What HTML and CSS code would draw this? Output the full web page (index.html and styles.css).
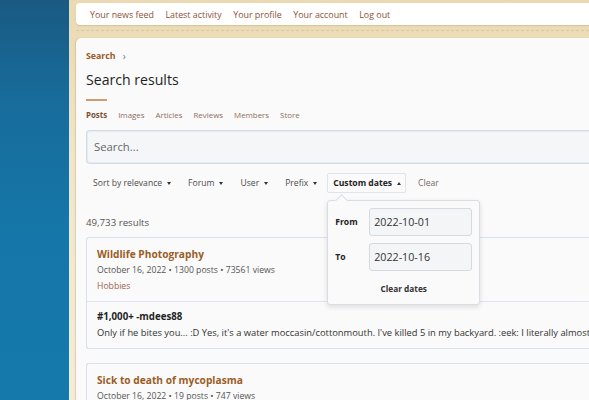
FILE: index.html
```html
<!DOCTYPE html>
<html lang="en">
<head>
<meta charset="utf-8">
<title>Search results</title>
<link rel="stylesheet" href="styles.css">
</head>
<body>
<div class="page">
  <div class="sidebar"></div>
  <div class="main">
    <nav class="topnav">
      <a href="#">Your news feed</a>
      <a href="#">Latest activity</a>
      <a href="#">Your profile</a>
      <a href="#">Your account</a>
      <a href="#">Log out</a>
    </nav>
    <div class="dash"></div>
    <div class="panel">
      <div class="crumbs"><a href="#">Search</a><span class="chev">&rsaquo;</span></div>
      <h1 class="title">Search results</h1>
      <div class="title-rule"></div>
      <div class="tabs">
        <a class="tab active" href="#">Posts</a>
        <a class="tab" href="#">Images</a>
        <a class="tab" href="#">Articles</a>
        <a class="tab" href="#">Reviews</a>
        <a class="tab" href="#">Members</a>
        <a class="tab" href="#">Store</a>
      </div>
      <div class="searchbox">Search...</div>
      <div class="filters">
        <span class="filter down sort">Sort by relevance</span>
        <span class="filter down">Forum</span>
        <span class="filter down">User</span>
        <span class="filter down">Prefix</span>
        <span class="filter-wrap">
          <span class="filter up open">Custom dates</span>
          <div class="popup">
            <div class="prow"><span class="plabel">From</span><span class="pinput">2022-10-01</span></div>
            <div class="prow"><span class="plabel">To</span><span class="pinput">2022-10-16</span></div>
            <div class="pclear">Clear dates</div>
          </div>
        </span>
        <span class="filter clear">Clear</span>
      </div>
      <div class="count">49,733 results</div>
      <div class="card">
        <div class="card-head">
          <div class="rtitle">Wildlife Photography</div>
          <div class="meta">October 16, 2022 &bull; 1300 posts &bull; 73561 views</div>
          <div class="forum">Hobbies</div>
        </div>
        <div class="card-body">
          <div class="ptitle">#1,000+ -mdees88</div>
          <div class="snippet">Only if he bites you... :D Yes, it's a water moccasin/cottonmouth. I've killed 5 in my backyard. :eek: I literally almost stepped on it while mowing the lawn.</div>
        </div>
      </div>
      <div class="card">
        <div class="card-head">
          <div class="rtitle">Sick to death of mycoplasma</div>
          <div class="meta">October 16, 2022 &bull; 19 posts &bull; 747 views</div>
        </div>
      </div>
    </div>
  </div>
</div>
</body>
</html>
```
FILE: styles.css
```css
html, body {
  margin: 0;
  padding: 0;
  height: 100%;
  overflow: hidden;
}
body {
  font-family: "Open Sans", "Noto Sans", "Liberation Sans", sans-serif;
  background: #efe3c5;
  color: #333;
}
a { text-decoration: none; }
.page {
  display: flex;
  height: 400px;
  overflow: hidden;
}
.sidebar {
  flex: 0 0 69px;
  background: linear-gradient(180deg, #1a5a82 0%, #176c9b 25%, #1577a9 60%, #1679ab 100%);
}
.main {
  flex: 0 0 560px;
  padding-left: 7px;
  padding-top: 3px;
  background: linear-gradient(180deg, #ead9b2 0%, #f1e6c9 40%, #f4ecd5 100%);
}
.topnav {
  height: 22px;
  background: #fff;
  border-radius: 4px 0 0 4px;
  display: flex;
  align-items: center;
  gap: 11.5px;
  padding-left: 14px;
  box-shadow: 0 1px 1px rgba(150, 120, 60, 0.25);
}
.topnav a {
  color: #8d5236;
  font-size: 8.9px;
}
.dash {
  margin-top: 5px;
  border-top: 1px dashed #d6c49b;
  opacity: 0.8;
}
.panel {
  margin-top: 7px;
  height: 400px;
  background: #fafafa;
  border-radius: 5px 0 0 0;
  padding: 12px 0 0 10px;
  box-shadow: -1px 0 1px rgba(170, 140, 80, 0.3);
}
.crumbs {
  height: 12px;
  line-height: 12px;
  font-size: 8.8px;
  font-weight: 700;
  display: flex;
  align-items: center;
}
.crumbs a { color: #9a5a28; }
.chev {
  color: #777;
  font-weight: 400;
  font-size: 10px;
  margin-left: 7px;
}
.title {
  margin: 8px 0 0 0;
  height: 20px;
  line-height: 20px;
  font-size: 14.1px;
  font-weight: 400;
  color: #1f1f1f;
}
.title-rule {
  margin-top: 9px;
  width: 21px;
  height: 2px;
  background: #cf9b72;
}
.tabs {
  margin-top: 8px;
  height: 12px;
  line-height: 12px;
  display: flex;
  gap: 11px;
  font-size: 7.9px;
}
.tab { color: #8e6e62; }
.tab.active { color: #7a5234; font-weight: 700; }
.searchbox {
  margin-top: 9px;
  height: 32px;
  border: 1px solid #d3dce6;
  border-right: none;
  border-radius: 4px 0 0 4px;
  background: #f5f6f8;
  box-shadow: inset 0 0 0 1px #e6ebf0;
  padding-left: 7px;
  line-height: 32px;
  font-size: 11.3px;
  color: #666;
}
.filters {
  margin-top: 9px;
  height: 20px;
  display: flex;
  align-items: center;
  font-size: 8.6px;
  color: #4b4b4b;
  white-space: nowrap;
}
.filter {
  display: inline-flex;
  align-items: center;
  height: 20px;
  box-sizing: border-box;
}
.filter.sort { margin-left: 7px; }
.filter.down { margin-right: 17px; }
.filter.down::after,
.filter.up::after {
  content: "";
  margin-left: 5px;
  border-left: 2.5px solid transparent;
  border-right: 2.5px solid transparent;
}
.filter.down::after { border-top: 3px solid #333; }
.filter.up::after { border-bottom: 3px solid #333; }
.filter-wrap {
  position: relative;
  display: inline-flex;
  margin-left: -7px;
}
.filter.open {
  font-weight: 700;
  color: #222;
  border: 1px solid #dfe4ea;
  border-radius: 2px;
  background: #fbfbfb;
  padding: 0 4px 0 5px;
}
.filter.clear {
  color: #76676a;
  margin-left: 12px;
}
.popup {
  position: absolute;
  left: 0;
  top: 27px;
  width: 153px;
  height: 105px;
  box-sizing: border-box;
  background: #fafafa;
  border: 1px solid #d9dee4;
  border-radius: 3px;
  box-shadow: 0 2px 5px rgba(0, 0, 0, 0.12);
  padding: 7px 7px 0 7px;
  z-index: 5;
}
.popup::before {
  content: "";
  position: absolute;
  left: 9px;
  top: -5px;
  width: 8px;
  height: 8px;
  background: #fafafa;
  border-left: 1px solid #d9dee4;
  border-top: 1px solid #d9dee4;
  transform: rotate(45deg);
}
.prow {
  display: flex;
  align-items: center;
  height: 28px;
  margin-bottom: 7px;
}
.plabel {
  width: 34px;
  font-size: 8.6px;
  font-weight: 700;
  color: #222;
}
.pinput {
  flex: 0 0 103px;
  height: 28px;
  box-sizing: border-box;
  border: 1px solid #d3dae2;
  border-radius: 3px;
  background: #f4f5f7;
  line-height: 26px;
  padding-left: 4px;
  font-size: 10.7px;
  color: #333;
}
.pclear {
  text-align: center;
  font-size: 8.3px;
  font-weight: 700;
  color: #333;
  margin-top: 12px;
}
.count {
  margin-top: 22px;
  height: 16px;
  line-height: 16px;
  font-size: 9.7px;
  color: #555;
}
.card {
  margin-top: 6px;
  border: 1px solid #d8e0e9;
  border-right: none;
  border-radius: 3px 0 0 3px;
  background: #fafafa;
}
.card + .card { margin-top: 14px; }
.card-head {
  padding: 8px 0 7px 10px;
}
.card-body {
  border-top: 1px solid #dde4ec;
  padding: 7px 0 7px 10px;
}
.rtitle {
  height: 16px;
  line-height: 16px;
  font-size: 10.2px;
  font-weight: 700;
  color: #9b5d26;
}
.meta {
  height: 16px;
  line-height: 16px;
  font-size: 8.66px;
  color: #555;
}
.forum {
  height: 16px;
  line-height: 16px;
  font-size: 8.66px;
  color: #9a6450;
}
.ptitle {
  height: 16px;
  line-height: 16px;
  font-size: 9.7px;
  font-weight: 700;
  color: #1f1f1f;
}
.snippet {
  height: 16px;
  line-height: 16px;
  font-size: 9.35px;
  color: #333;
  white-space: nowrap;
  overflow: hidden;
}
```
